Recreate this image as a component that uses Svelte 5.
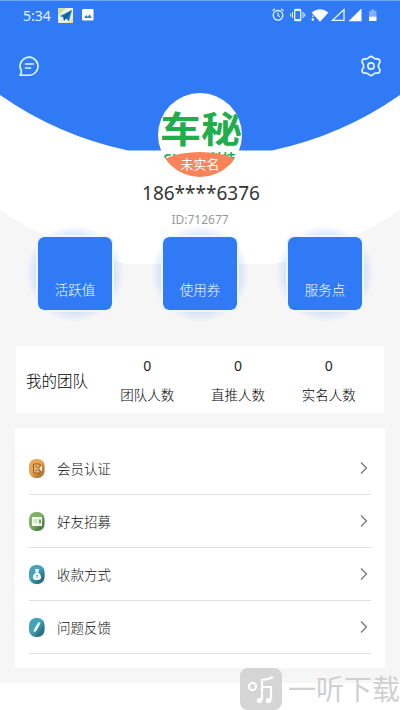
<script lang="ts">
	const tiles = ['活跃值', '使用券', '服务点'];

	const team = [
		{ label: '团队人数', count: 0 },
		{ label: '直推人数', count: 0 },
		{ label: '实名人数', count: 0 }
	];

	const menu = [
		{ icon: 'card', label: '会员认证', from: '#e9a550', to: '#b9793a' },
		{ icon: 'invite', label: '好友招募', from: '#7fb069', to: '#4f8548' },
		{ icon: 'money', label: '收款方式', from: '#45a3b9', to: '#2b7288' },
		{ icon: 'pen', label: '问题反馈', from: '#45a3b9', to: '#2b7288' }
	];
</script>

<div class="screen">
	<svg class="backdrop" width="400" height="290" viewBox="0 0 400 290">
		<path d="M0 90V210A351 351 0 0 0 128 264H272A351 351 0 0 0 400 210V90Z" fill="#fff" />
		<path d="M0 0V95A351 351 0 0 0 128 150.500H272A351 351 0 0 0 400 95V0Z" fill="#307bf5" />
		<path d="M0 0H400V1H0Z" fill="#6ca5f8" />
	</svg>

	<div class="status">
		<span class="time">5:34</span>
		<svg class="plane" width="15" height="15" viewBox="0 0 15 15">
			<path d="M0 0H15V15H0Z" fill="#e9f1df" />
			<path d="M0 0H8L0 8Z" fill="#cfe0a0" />
			<path d="M9 15L15 9V15Z" fill="#f3df9b" />
			<path d="M2 8L14 2L11 13L7.500 10.500L6 13L5.500 9.500Z" fill="#1479bd" />
			<path d="M5.500 9.500L14 2L7.500 10.500L6 13Z" fill="#0b5487" />
		</svg>
		<svg class="photo" width="12" height="12" viewBox="0 0 12 12">
			<rect width="11.500" height="11.500" rx="1.200" fill="#fff" />
			<path d="M2 9L4.200 6L5.800 7.700L7.600 5.300L10 9Z" fill="#477bc5" />
		</svg>
		<svg class="system" width="106" height="16" viewBox="0 0 106 16" fill="none" stroke="#e3f4ff">
			<circle cx="6" cy="8.300" r="4.800" stroke-width="1.300" />
			<path d="M6 5.500V8.500L8 9.800M.500 3.800L3 1.800M9 1.800L11.500 3.800" stroke-width="1.100" />
			<rect x="22.700" y="2.500" width="6" height="11" rx="1" stroke-width="1.300" />
			<path d="M22.500 3.200H29M22.500 12.700H29" stroke-width="1.600" />
			<path d="M20.500 5V11M31 5V11M18.700 6.500V9.500M32.800 6.500V9.500" stroke-width="1" />
			<path d="M39.500 5.500Q48 -1 56.500 5.500L48 14.700Z" fill="#fff" stroke="none" />
			<path d="M40.800 8.500V10M40.800 11V14M39.500 12.500H42" stroke-width="1.300" />
			<path d="M60.500 13.400H72V2.500Z" stroke-width="1.300" />
			<path d="M76.500 14.300H89.500V1.500Z" fill="#fff" stroke="none" />
			<path d="M97 4H99V2.500H102.500V4H104.500V9.500H97Z" fill="#83b0f9" stroke="none" />
			<path d="M97 9.500H104.500V14H97Z" fill="#fff" stroke="none" />
		</svg>
	</div>

	<nav>
		<svg width="22" height="22" viewBox="0 0 22 22" fill="none" stroke="#dff6ff" stroke-width="1.600" stroke-linecap="round" stroke-linejoin="round">
			<path d="M3.400 16A9 9 0 1 1 11.500 20.200H2Q3.600 18.300 3.400 16Z" />
			<path d="M7.500 9H15.500M7.500 13H12.500" />
		</svg>
		<svg width="22" height="22" viewBox="0 0 22 22" fill="none" stroke="#dff6ff" stroke-width="1.700" stroke-linejoin="round">
			<path d="M9 2.300Q11 .700 13 2.300Q14.500 4.400 17 3.800Q19.600 3.700 20 6.400Q20 7.500 19 8.700Q17.800 11 19 13.300Q20 14.500 20 15.600Q19.600 18.300 17 18.200Q14.500 17.600 13 19.700Q11 21.300 9 19.700Q7.500 17.600 5 18.200Q2.400 18.300 2 15.600Q2 14.500 3 13.300Q4.200 11 3 8.700Q2 7.500 2 6.400Q2.400 3.700 5 3.800Q7.500 4.400 9 2.300Z" />
			<circle cx="11" cy="11" r="3.100" />
		</svg>
	</nav>

	<header>
		<div class="avatar">
			<span class="logo">车秘</span>
			<span class="sublogo">CHEMI科技</span>
			<span class="verify">未实名</span>
		</div>
		<h1>186****6376</h1>
		<p>ID:712677</p>
	</header>

	<div class="tiles">
		{#each tiles as tile}
			<div class="tile"><span>{tile}</span></div>
		{/each}
	</div>

	<section class="team">
		<h2>我的团队</h2>
		{#each team as item}
			<div class="stat">
				<b>{item.count}</b>
				<span>{item.label}</span>
			</div>
		{/each}
	</section>

	<ul>
		{#each menu as item}
			<li>
				<svg width="16" height="19" viewBox="0 0 16 19">
					<defs>
						<linearGradient id="{item.icon}-bg" x1="0" y1="0" x2="1" y2="1">
							<stop offset=".45" stop-color={item.from} />
							<stop offset=".75" stop-color={item.to} />
						</linearGradient>
					</defs>
					<rect width="15.600" height="19" rx="7" fill="url(#{item.icon}-bg)" />
					{#if item.icon === 'card'}
						<path d="M4.500 5H11V7L9 9.500L11 12V14H4.500Z" fill="#e9b165" stroke="#8c5a2a" stroke-width=".900" />
						<path d="M6 7.500H8.500M6 11.500H8.500" stroke="#a06c33" stroke-width=".800" />
						<path d="M13 6.500L10 9.500L13 12.500Z" fill="#fff0d0" />
					{:else if item.icon === 'invite'}
						<path d="M3 5H13V14H3Z" fill="#eff8e8" />
						<path d="M4.500 8H8.500M4.500 10H8.500" stroke="#b4cda7" />
						<path d="M11 7.500V11.500" stroke="#477640" stroke-width="1.400" />
					{:else if item.icon === 'money'}
						<path d="M6 4H10L9.200 7.500Q12.500 10 12 13Q11.500 15 8 15Q4.500 15 4 13Q3.500 10 6.800 7.500Z" fill="#eefaff" />
						<path d="M7 10L8 11L9 10M8 11V13" fill="none" stroke="#3d8fa3" stroke-width=".700" />
					{:else}
						<path d="M9.500 4L11.500 5.200L7.200 13L4.800 14.500L5 11.500Z" fill="#effbff" />
					{/if}
				</svg>
				<span>{item.label}</span>
				<svg class="arrow" width="8" height="14" viewBox="0 0 8 14">
					<path d="M1 1.500L6.500 7L1 12.500" fill="none" stroke="#777" stroke-width="1.300" />
				</svg>
			</li>
		{/each}
	</ul>

	<div class="watermark">
		<svg width="42" height="42" viewBox="0 0 42 42">
			<rect width="42" height="42" rx="8" fill="#d5d5d5" />
			<g fill="none" stroke="#fff" stroke-width="2.200">
				<circle cx="12.500" cy="18.500" r="3.600" />
				<path d="M22 32V12Q28 12 33 9M22 19H31V32" />
			</g>
			<circle cx="19.500" cy="32.500" r="2.700" fill="#fff" />
			<circle cx="28.500" cy="32.500" r="2.700" fill="#fff" />
		</svg>
		<span>一听下载</span>
	</div>
</div>

<style>
	:global(body) {
		background: #fff;
	}

	.screen {
		position: relative;
		width: 400px;
		height: 710px;
		overflow: hidden;
		background: linear-gradient(#f6f6f6 683px, #fff 683px);
		color: #333;
		font-family: 'Noto Sans', 'Noto Sans CJK SC', sans-serif;
	}

	.backdrop {
		position: absolute;
		top: 0;
		left: 0;
	}

	.status {
		position: relative;
		display: flex;
		align-items: center;
		height: 30px;
		padding: 0 22px 0 23px;
	}

	.time {
		width: 35px;
		font-size: 14px;
		color: #e3f4ff;
	}

	.photo {
		margin-left: 9px;
	}

	.system {
		margin-left: auto;
	}

	nav {
		position: relative;
		display: flex;
		justify-content: space-between;
		height: 22px;
		padding: 25px 18px 0;
	}

	header {
		position: relative;
		display: flex;
		flex-direction: column;
		align-items: center;
		padding-top: 16px;
	}

	.avatar {
		position: relative;
		width: 84px;
		height: 84px;
		border-radius: 50%;
		overflow: hidden;
		background: #fff;
		text-align: center;
	}

	.logo {
		position: absolute;
		top: 19px;
		left: 2px;
		font-size: 36px;
		font-weight: 700;
		line-height: 36px;
		white-space: nowrap;
		color: #20ad4b;
		transform: scaleX(1.14);
		transform-origin: left;
	}

	.sublogo {
		position: absolute;
		top: 59px;
		left: 5px;
		font-size: 13px;
		font-weight: 700;
		line-height: 13px;
		letter-spacing: 0.6px;
		white-space: nowrap;
		color: #20ad4b;
	}

	.verify {
		position: absolute;
		top: 59px;
		left: -4px;
		width: 92px;
		height: 40px;
		border-radius: 50% 50% 0 0 / 20px 20px 0 0;
		background: #f9845a;
		font-size: 13px;
		line-height: 24px;
		color: #fff;
	}

	h1 {
		margin: 2px 0 0 2px;
		font-size: 19px;
		font-weight: 400;
		line-height: 28px;
	}

	p {
		margin: 4px 0 0;
		font-size: 12px;
		line-height: 18px;
		color: #999;
	}

	.tiles {
		position: relative;
		z-index: 0;
		display: flex;
		justify-content: space-between;
		padding: 6px 36px 0;
	}

	.tile {
		position: relative;
		box-sizing: border-box;
		width: 78px;
		height: 77px;
		border: 2px solid #eef7ff;
		border-radius: 8px;
		background: #307bf5;
		background-clip: padding-box;
		text-align: center;
	}

	.tile::before {
		content: '';
		position: absolute;
		z-index: -1;
		inset: -12px;
		border-radius: 50%;
		background: radial-gradient(closest-side, #307bf533 76%, #307bf514 90%, #307bf500);
	}

	.tile span {
		display: block;
		margin-top: 41px;
		font-size: 13.5px;
		line-height: 22px;
		color: #f2faff;
	}

	.tile span,
	h2,
	.stat span,
	li span {
		font-family: 'Noto Sans CJK SC', sans-serif;
		font-weight: 300;
	}

	.team {
		display: flex;
		align-items: center;
		box-sizing: border-box;
		width: 368px;
		height: 67px;
		margin: 34px 0 0 16px;
		padding: 0 10px;
		background: #fff;
	}

	h2 {
		width: 76px;
		margin: 0;
		font-size: 15.5px;
		color: #000;
	}

	.stat {
		display: flex;
		flex: 1;
		flex-direction: column;
		align-items: center;
		font-size: 13.5px;
		line-height: 20px;
		color: #000;
	}

	.stat b {
		margin-bottom: 8px;
		font-size: 14px;
		font-weight: 400;
		color: #222;
	}

	ul {
		box-sizing: border-box;
		width: 370px;
		height: 240px;
		margin: 15px 0 0 15px;
		padding: 14px 14px 0;
		list-style: none;
		background: #fff;
	}

	li {
		display: flex;
		align-items: center;
		box-sizing: border-box;
		height: 53px;
		border-bottom: 1px solid #e1e1e1;
		font-size: 13.5px;
		color: #111;
	}

	li span {
		margin-left: 12px;
	}

	.arrow {
		margin: 0 3px 0 auto;
	}

	.watermark {
		position: absolute;
		top: 668px;
		left: 240px;
		display: flex;
		align-items: center;
		font-size: 28px;
		line-height: 42px;
		white-space: nowrap;
		color: #d0d0d0;
	}

	.watermark span {
		margin: -1px 0 0 6px;
	}
</style>
